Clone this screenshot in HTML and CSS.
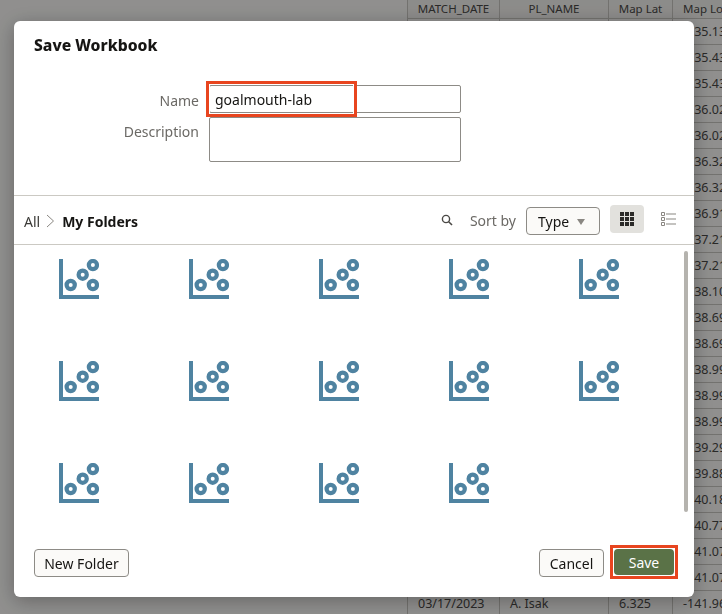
FILE: index.html
```html
<!DOCTYPE html>
<html>

<head>
    <title>Save Workbook</title>
    <link rel="stylesheet" href="styles.css">
</head>

<body>
    <div class="sheet">
        <table class="data-table">
            <thead>
                <tr><th>MATCH_DATE</th><th>PL_NAME</th><th>Map Lat</th><th class="lon-head">Map Lon</th></tr>
            </thead>
            <tbody>
                <tr><td></td><td></td><td></td><td>-135.13</td></tr>
                <tr><td></td><td></td><td></td><td>-135.43</td></tr>
                <tr><td></td><td></td><td></td><td>-135.43</td></tr>
                <tr><td></td><td></td><td></td><td>-136.02</td></tr>
                <tr><td></td><td></td><td></td><td>-136.02</td></tr>
                <tr><td></td><td></td><td></td><td>-136.32</td></tr>
                <tr><td></td><td></td><td></td><td>-136.32</td></tr>
                <tr><td></td><td></td><td></td><td>-136.91</td></tr>
                <tr><td></td><td></td><td></td><td>-137.21</td></tr>
                <tr><td></td><td></td><td></td><td>-137.21</td></tr>
                <tr><td></td><td></td><td></td><td>-138.10</td></tr>
                <tr><td></td><td></td><td></td><td>-138.69</td></tr>
                <tr><td></td><td></td><td></td><td>-138.69</td></tr>
                <tr><td></td><td></td><td></td><td>-138.99</td></tr>
                <tr><td></td><td></td><td></td><td>-138.99</td></tr>
                <tr><td></td><td></td><td></td><td>-138.99</td></tr>
                <tr><td></td><td></td><td></td><td>-139.29</td></tr>
                <tr><td></td><td></td><td></td><td>-139.88</td></tr>
                <tr><td></td><td></td><td></td><td>-140.18</td></tr>
                <tr><td></td><td></td><td></td><td>-140.77</td></tr>
                <tr><td></td><td></td><td></td><td>-141.07</td></tr>
                <tr><td></td><td></td><td></td><td>-141.07</td></tr>
                <tr><td>03/17/2023</td><td>A. Isak</td><td>6.325</td><td>-141.96</td></tr>
            </tbody>
        </table>
    </div>

    <div class="scrim">
        <div class="dialog">
            <h2 class="dialog-title">Save Workbook</h2>

            <form class="save-form">
                <label class="form-label form-label-name" for="wbName">Name</label>
                <div class="name-wrap">
                    <input id="wbName" class="text-field" type="text" value="goalmouth-lab">
                    <span class="callout callout-name"></span>
                </div>
                <label class="form-label" for="wbDesc">Description</label>
                <textarea id="wbDesc" class="text-area"></textarea>
            </form>

            <div class="browser-bar">
                <div class="crumbs">
                    <span>All</span>
                    <svg class="crumb-sep" width="9" height="14" viewBox="0 0 9 14">
                        <path d="M1 1l6.5 6L1 13" fill="none" stroke="#8a8782" stroke-width="1"/>
                    </svg>
                    <strong>My Folders</strong>
                </div>
                <div class="bar-tools">
                    <svg class="search-icon" width="12" height="12" viewBox="0 0 12 12">
                        <circle cx="5" cy="5" r="3.6" fill="none" stroke="#4a4845" stroke-width="1.4"/>
                        <path d="M7.7 7.7L11 11" stroke="#4a4845" stroke-width="1.6"/>
                    </svg>
                    <span class="sort-label">Sort by</span>
                    <button type="button" class="sort-select">Type <span class="caret"></span></button>
                    <button type="button" class="view-btn view-btn-on">
                        <svg width="14" height="14" viewBox="0 0 14 14" fill="#2b2a28">
                            <path d="M0 0h4v4H0zM5 0h4v4H5zM10 0h4v4h-4zM0 5h4v4H0zM5 5h4v4H5zM10 5h4v4h-4zM0 10h4v4H0zM5 10h4v4H5zM10 10h4v4h-4z"/>
                        </svg>
                    </button>
                    <button type="button" class="view-btn">
                        <svg width="15" height="14" viewBox="0 0 15 14" fill="none" stroke="#8a8782">
                            <path d="M.5.5h3v3h-3zM.5 5.5h3v3h-3zM.5 10.5h3v3h-3z"/>
                            <path d="M5 2h10M5 7h10M5 12h10" stroke-width="1.2"/>
                        </svg>
                    </button>
                </div>
            </div>

            <div class="file-area">
                <div class="file-grid">
                    <svg class="wb-icon" viewBox="0 0 40 40"><use href="#scatter"/></svg>
                    <svg class="wb-icon" viewBox="0 0 40 40"><use href="#scatter"/></svg>
                    <svg class="wb-icon" viewBox="0 0 40 40"><use href="#scatter"/></svg>
                    <svg class="wb-icon" viewBox="0 0 40 40"><use href="#scatter"/></svg>
                    <svg class="wb-icon" viewBox="0 0 40 40"><use href="#scatter"/></svg>
                    <svg class="wb-icon" viewBox="0 0 40 40"><use href="#scatter"/></svg>
                    <svg class="wb-icon" viewBox="0 0 40 40"><use href="#scatter"/></svg>
                    <svg class="wb-icon" viewBox="0 0 40 40"><use href="#scatter"/></svg>
                    <svg class="wb-icon" viewBox="0 0 40 40"><use href="#scatter"/></svg>
                    <svg class="wb-icon" viewBox="0 0 40 40"><use href="#scatter"/></svg>
                    <svg class="wb-icon" viewBox="0 0 40 40"><use href="#scatter"/></svg>
                    <svg class="wb-icon" viewBox="0 0 40 40"><use href="#scatter"/></svg>
                    <svg class="wb-icon" viewBox="0 0 40 40"><use href="#scatter"/></svg>
                    <svg class="wb-icon" viewBox="0 0 40 40"><use href="#scatter"/></svg>
                </div>
                <div class="scroll-thumb"></div>
            </div>

            <div class="dialog-foot">
                <button type="button" class="btn btn-folder">New Folder</button>
                <div class="foot-right">
                    <button type="button" class="btn btn-cancel">Cancel</button>
                    <div class="save-wrap">
                        <button type="button" class="btn btn-save">Save</button>
                        <span class="callout callout-save"></span>
                    </div>
                </div>
            </div>
        </div>
    </div>

    <svg class="icon-defs" width="0" height="0">
        <defs>
            <g id="scatter">
                <path d="M0 0h4v36h36v4H0z" fill="#4f83a1"/>
                <g fill="none" stroke="#4f83a1" stroke-width="4.2">
                    <circle cx="11.7" cy="26" r="4.1"/>
                    <circle cx="23.7" cy="15.7" r="4.1"/>
                    <circle cx="33.9" cy="6.1" r="4.1"/>
                    <circle cx="33.9" cy="26" r="4.1"/>
                </g>
            </g>
        </defs>
    </svg>
</body>

</html>
```

FILE: styles.css
```css
html,
body {
    height: 100%;
}

body {
    font-family: "Noto Sans", Arial, sans-serif;
    font-size: 14px;
    color: #161513;
    background-color: #f5f4f2;
    margin: 0;
    overflow: hidden;
}

.sheet {
    padding-left: 407px;
}

.data-table {
    table-layout: fixed;
    width: 330px;
    border-collapse: collapse;
    font-size: 12.5px;
    color: #484745;
}

.data-table th {
    font-size: 11.5px;
    font-weight: normal;
    height: 18px;
    padding: 0;
    border: 1px solid #c4c2bd;
    border-top: none;
    background-color: #efeeeb;
    line-height: 12px;
}

.data-table th:nth-child(1) {
    width: 91px;
}

.data-table th:nth-child(2) {
    width: 108px;
}

.data-table th:nth-child(3) {
    width: 63px;
}

.data-table th.lon-head {
    text-align: left;
    padding-left: 10px;
    white-space: nowrap;
}

.data-table td {
    height: 25px;
    padding: 0 0 0 10px;
    border: 1px solid #c4c2bd;
    white-space: nowrap;
    overflow: hidden;
}

.scrim {
    position: fixed;
    top: 0;
    right: 0;
    bottom: 0;
    left: 0;
    background-color: rgba(0, 0, 0, 0.41);
}

.dialog {
    position: absolute;
    top: 21px;
    left: 14px;
    width: 680px;
    height: 576px;
    display: flex;
    flex-direction: column;
    background-color: #fff;
    border-radius: 6px;
    box-shadow: 0 4px 20px rgba(0, 0, 0, 0.3);
}

.dialog-title {
    font-size: 15.7px;
    line-height: 22px;
    font-weight: 800;
    margin: 0;
    padding: 13px 20px 0;
}

.save-form {
    display: grid;
    grid-template-columns: 185px 252px;
    column-gap: 10px;
    row-gap: 4px;
    padding-top: 29px;
    padding-bottom: 33px;
    border-bottom: 1px solid #cbc9c3;
}

.form-label {
    height: 28px;
    text-align: right;
    color: #6b6965;
    line-height: 30px;
}

.form-label-name {
    line-height: 32px;
}

.name-wrap {
    position: relative;
}

.text-field,
.text-area {
    display: block;
    box-sizing: border-box;
    width: 252px;
    margin: 0;
    padding: 0 5px;
    font-family: inherit;
    font-size: 14px;
    color: #161513;
    background-color: #fff;
    border: 1px solid #8d8b86;
    border-radius: 2px;
    outline: none;
}

.text-field {
    height: 28px;
}

.text-area {
    height: 45px;
    resize: none;
}

.callout {
    position: absolute;
    border: 3px solid #e8451f;
    box-shadow: inset 0 0 0 1px #fff;
    pointer-events: none;
}

.callout-name {
    top: -4px;
    left: -3px;
    width: 145px;
    height: 30px;
}

.browser-bar {
    height: 48px;
    display: flex;
    justify-content: space-between;
    align-items: center;
    padding: 0 9px 0 10px;
    border-bottom: 1px solid #cbc9c3;
}

.crumbs {
    display: flex;
    align-items: center;
    color: #3a3936;
    padding-top: 2px;
}

.crumb-sep {
    margin: 0 7px 0 6px;
}

.crumbs strong {
    color: #161513;
    font-size: 14px;
}

.bar-tools {
    display: flex;
    align-items: center;
}

.search-icon {
    margin-right: 17px;
}

.sort-label {
    color: #6b6965;
    margin-right: 10px;
}

.sort-select {
    box-sizing: border-box;
    width: 74px;
    height: 28px;
    margin-top: 2px;
    margin-right: 10px;
    font-family: inherit;
    font-size: 14px;
    color: #161513;
    text-align: left;
    padding: 1px 0 0 11px;
    background-color: #fbfaf8;
    border: 1px solid #8d8b86;
    border-radius: 4px;
}

.caret {
    display: inline-block;
    margin-left: 4px;
    vertical-align: 2px;
    border-left: 4.5px solid transparent;
    border-right: 4.5px solid transparent;
    border-top: 6px solid #8a8782;
}

.view-btn {
    width: 34px;
    height: 28px;
    margin: 0 0 2px;
    padding: 0;
    display: flex;
    align-items: center;
    justify-content: center;
    background: none;
    border: none;
    border-radius: 4px;
}

.view-btn-on {
    background-color: #e2e1dd;
    margin-right: 7px;
}

.file-area {
    position: relative;
    flex: 1;
    padding: 14px 0 0 45px;
}

.file-grid {
    display: grid;
    grid-template-columns: repeat(5, 40px);
    grid-auto-rows: 40px;
    column-gap: 90px;
    row-gap: 62px;
}

.wb-icon {
    width: 40px;
    height: 40px;
}

.scroll-thumb {
    position: absolute;
    top: 6px;
    right: 6px;
    width: 4px;
    height: 261px;
    background-color: #b5b3ae;
    border-radius: 2px;
}

.dialog-foot {
    display: flex;
    justify-content: space-between;
    align-items: flex-start;
    padding: 0 20px 20px;
}

.foot-right {
    display: flex;
    align-items: flex-start;
}

.btn {
    height: 28px;
    padding: 0;
    font-family: inherit;
    font-size: 14px;
    color: #161513;
    background-color: #fbfaf8;
    border: 1px solid #8d8b86;
    border-radius: 4px;
}

.btn-folder {
    width: 95px;
}

.btn-cancel {
    width: 65px;
}

.save-wrap {
    position: relative;
    margin-left: 10px;
}

.btn-save {
    display: block;
    width: 60px;
    height: 26px;
    color: #fff;
    background-color: #5a7247;
    border: none;
}

.callout-save {
    top: -4px;
    left: -4px;
    width: 62px;
    height: 28px;
}

.icon-defs {
    position: absolute;
}
```
